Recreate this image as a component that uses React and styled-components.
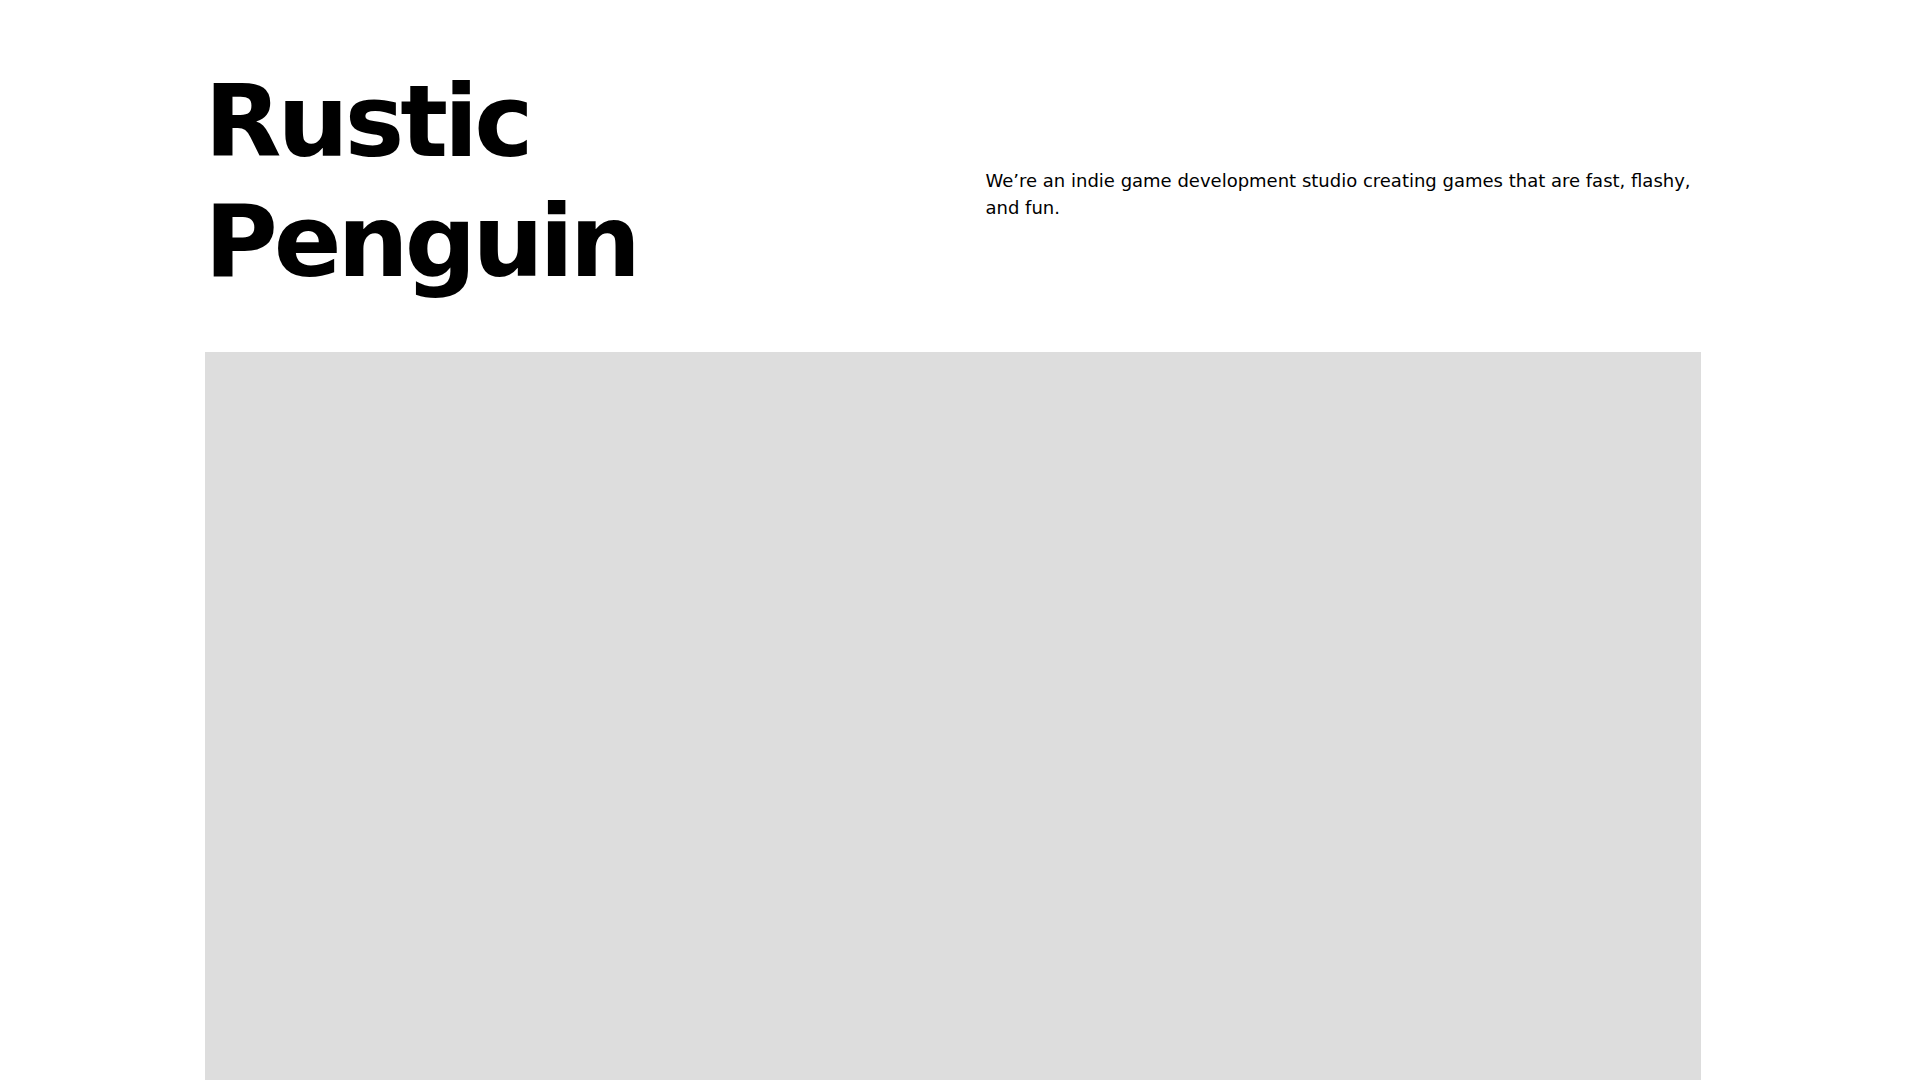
import React from "react";
import styled, { createGlobalStyle } from "styled-components";

const GlobalStyle = createGlobalStyle`
  html {
    overflow-y: scroll;
  }
  html, body {
    margin: 0;
    padding: 0;
    background: #ffffff;
    color: #000000;
    font-family: "DejaVu Sans", "Liberation Sans", sans-serif;
  }
  * { box-sizing: border-box; }
`;

const Frame = styled.div`
  padding-right: 15px;
`;

const Page = styled.main`
  max-width: 1496px;
  margin: 0 auto;
  padding: 62px 0 121px;
`;

const Hero = styled.header`
  display: grid;
  grid-template-columns: 1fr 1fr;
  column-gap: 66px;
  align-items: center;
`;

const Title = styled.h1`
  margin: 0;
  font-size: 100px;
  line-height: 1.2;
  font-weight: 700;
  letter-spacing: -4px;
`;

const Intro = styled.p`
  margin: 24px 0 0;
  font-size: 18px;
  line-height: 1.5;
  font-weight: 400;
`;

const Showcase = styled.div`
  margin-top: 50px;
  height: 1600px;
  background: #dddddd;
`;

export default function App() {
  return (
    <>
      <GlobalStyle />
      <Frame>
        <Page>
          <Hero>
            <Title>
              Rustic
              <br />
              Penguin
            </Title>
            <Intro>
              We’re an indie game development studio creating games that are fast, flashy, and fun.
            </Intro>
          </Hero>
          <Showcase />
        </Page>
      </Frame>
    </>
  );
}
